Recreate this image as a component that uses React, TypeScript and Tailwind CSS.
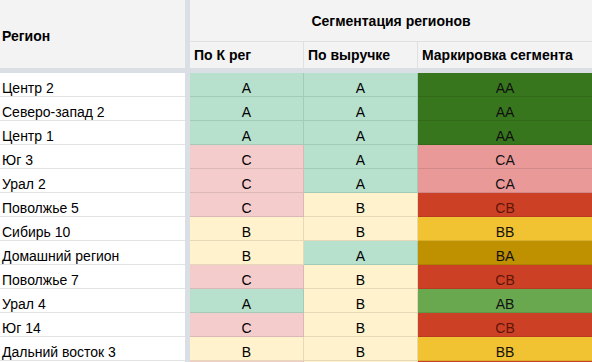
/**
 * Region segmentation sheet: frozen region column + three segmentation columns.
 */

type Seg = "AA" | "CA" | "CB" | "BB" | "BA" | "AB";

interface Row {
    region: string;
    byK: "A" | "B" | "C";
    byRevenue: "A" | "B" | "C";
    seg: Seg;
    /** partially visible row at the bottom edge, no text */
    clipped?: boolean;
}

const rows: Row[] = [
    { region: "Центр 2", byK: "A", byRevenue: "A", seg: "AA" },
    { region: "Северо-запад 2", byK: "A", byRevenue: "A", seg: "AA" },
    { region: "Центр 1", byK: "A", byRevenue: "A", seg: "AA" },
    { region: "Юг 3", byK: "C", byRevenue: "A", seg: "CA" },
    { region: "Урал 2", byK: "C", byRevenue: "A", seg: "CA" },
    { region: "Поволжье 5", byK: "C", byRevenue: "B", seg: "CB" },
    { region: "Сибирь 10", byK: "B", byRevenue: "B", seg: "BB" },
    { region: "Домашний регион", byK: "B", byRevenue: "A", seg: "BA" },
    { region: "Поволжье 7", byK: "C", byRevenue: "B", seg: "CB" },
    { region: "Урал 4", byK: "A", byRevenue: "B", seg: "AB" },
    { region: "Юг 14", byK: "C", byRevenue: "B", seg: "CB" },
    { region: "Дальний восток 3", byK: "B", byRevenue: "B", seg: "BB" },
    { region: "", byK: "C", byRevenue: "B", seg: "CB", clipped: true },
];

const letterBg = {
    A: "bg-[#b7e1cd]",
    B: "bg-[#fff2cc]",
    C: "bg-[#f4cccc]",
};

const segStyle: Record<Seg, string> = {
    AA: "bg-[#38761d] text-[#111]",
    CA: "bg-[#ea9999] text-[#111]",
    CB: "bg-[#cc4125] text-[#5e1408]",
    BB: "bg-[#f1c232] text-[#111]",
    BA: "bg-[#bf9000] text-[#111]",
    AB: "bg-[#6aa84f] text-[#111]",
};

function Divider() {
    return <div className="w-[5px] shrink-0 bg-[#dadfe6]" />;
}

export default function App() {
    return (
        <div className="w-[592px] h-[362px] overflow-hidden bg-white text-[14px] text-black font-['Liberation_Sans',Arial,sans-serif]">
            {/* Header */}
            <div className="flex h-[68px] bg-[#f3f3f3]">
                <div className="w-[185px] shrink-0 flex items-end pl-[2px] pb-[21px] font-bold">
                    Регион
                </div>
                <Divider />
                <div className="flex-1 flex flex-col">
                    <div className="h-[42px] border-b border-[#e0e0e0] flex items-end justify-center pb-[9px] font-bold">
                        Сегментация регионов
                    </div>
                    <div className="flex-1 flex font-bold">
                        <div className="w-[114px] border-r border-[#e0e0e0] flex items-end pl-[4px] pb-[2px]">
                            По К рег
                        </div>
                        <div className="w-[114px] border-r border-[#e0e0e0] flex items-end pl-[4px] pb-[2px]">
                            По выручке
                        </div>
                        <div className="flex-1 flex items-end pl-[4px] pb-[2px]">
                            Маркировка сегмента
                        </div>
                    </div>
                </div>
            </div>
            <div className="h-[5px] bg-[#dadfe6]" />

            {/* Body */}
            {rows.map((r, i) => (
                <div key={i} className="flex h-[24px]">
                    <div className="w-[185px] shrink-0 border-b border-[#e2e3e3] flex items-end pl-[2px] leading-4">
                        {r.region}
                    </div>
                    <Divider />
                    <div className={`w-[114px] ${letterBg[r.byK]} border-b border-r border-black/10 flex items-end justify-center leading-4`}>
                        {!r.clipped && r.byK}
                    </div>
                    <div className={`w-[114px] ${letterBg[r.byRevenue]} border-b border-r border-black/10 flex items-end justify-center leading-4`}>
                        {!r.clipped && r.byRevenue}
                    </div>
                    <div className={`flex-1 ${segStyle[r.seg]} border-b border-black/10 flex items-end justify-center leading-4`}>
                        {!r.clipped && r.seg}
                    </div>
                </div>
            ))}
        </div>
    );
}
